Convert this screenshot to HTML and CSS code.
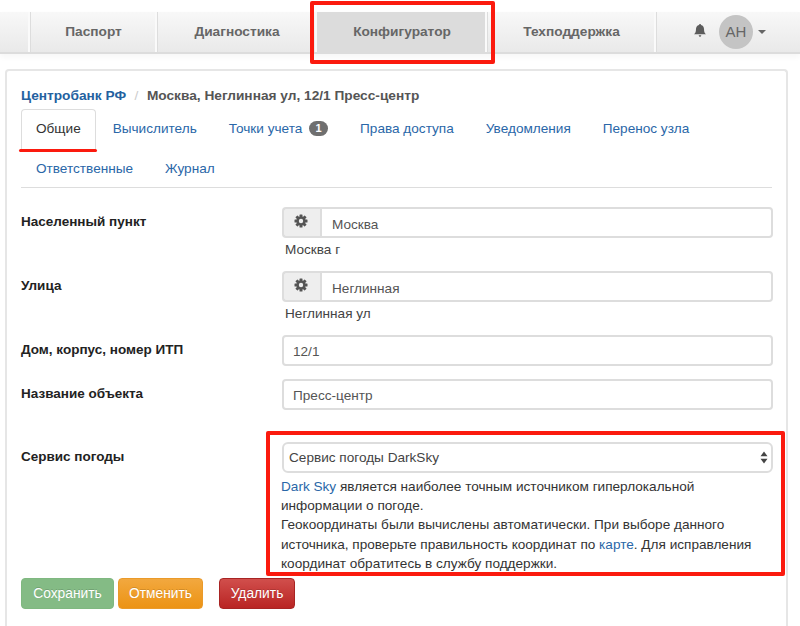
FILE: index.html
```html
<!DOCTYPE html>
<html lang="ru">
<head>
<meta charset="utf-8">
<title>Конфигуратор</title>
<link rel="stylesheet" href="styles.css">
</head>
<body>
<nav class="navbar">
  <span class="nav-item nav-blank"></span>
  <a class="nav-item nav-passport">Паспорт</a>
  <a class="nav-item nav-diag">Диагностика</a>
  <a class="nav-item nav-config active">Конфигуратор</a>
  <a class="nav-item nav-support">Техподдержка</a>
  <div class="nav-user">
    <svg class="bell" width="14" height="15" viewBox="0 0 14 15"><path d="M7 1c.6 0 1 .4 1 .9 2 .4 3 2 3 4.100 0 3 .8 4.400 2 5.300H1C2.200 10.400 3 9 3 6c0-2.100 1-3.700 3-4.100C6 1.400 6.400 1 7 1z"/><path d="M5.700 12.300h2.600C8.200 13.200 7.700 13.800 7 13.800s-1.200-.6-1.300-1.500z"/></svg>
    <span class="avatar">АН</span>
    <span class="caret"></span>
  </div>
</nav>

<main class="panel">
  <div class="crumbs"><a class="crumb-link">Центробанк РФ</a><span class="crumb-sep">/</span><span class="crumb-cur">Москва, Неглинная ул, 12/1 Пресс-центр</span></div>
  <ul class="tabs">
    <li class="tab active"><a>Общие</a></li>
    <li class="tab"><a>Вычислитель</a></li>
    <li class="tab"><a>Точки учета <span class="badge">1</span></a></li>
    <li class="tab"><a>Права доступа</a></li>
    <li class="tab"><a>Уведомления</a></li>
    <li class="tab"><a>Перенос узла</a></li>
    <li class="tab"><a>Ответственные</a></li>
    <li class="tab"><a>Журнал</a></li>
  </ul>

  <form class="form">
    <div class="row row-help">
      <label class="label">Населенный пункт</label>
      <div class="field">
        <div class="group">
          <span class="addon"><svg width="14" height="14" viewBox="0 0 14 14"><g fill="#555"><rect x="5.500" y="0.500" width="3" height="13" rx=".5"/><rect x="5.500" y="0.500" width="3" height="13" rx=".5" transform="rotate(45 7 7)"/><rect x="5.500" y="0.500" width="3" height="13" rx=".5" transform="rotate(90 7 7)"/><rect x="5.500" y="0.500" width="3" height="13" rx=".5" transform="rotate(135 7 7)"/></g><circle cx="7" cy="7" r="3.500" fill="none" stroke="#555" stroke-width="2.200"/><circle cx="7" cy="7" r="2.200" fill="#eee"/></svg></span>
          <input class="input input-joined" value="Москва">
        </div>
        <div class="help">Москва г</div>
      </div>
    </div>
    <div class="row row-help">
      <label class="label">Улица</label>
      <div class="field">
        <div class="group">
          <span class="addon"><svg width="14" height="14" viewBox="0 0 14 14"><g fill="#555"><rect x="5.500" y="0.500" width="3" height="13" rx=".5"/><rect x="5.500" y="0.500" width="3" height="13" rx=".5" transform="rotate(45 7 7)"/><rect x="5.500" y="0.500" width="3" height="13" rx=".5" transform="rotate(90 7 7)"/><rect x="5.500" y="0.500" width="3" height="13" rx=".5" transform="rotate(135 7 7)"/></g><circle cx="7" cy="7" r="3.500" fill="none" stroke="#555" stroke-width="2.200"/><circle cx="7" cy="7" r="2.200" fill="#eee"/></svg></span>
          <input class="input input-joined" value="Неглинная">
        </div>
        <div class="help">Неглинная ул</div>
      </div>
    </div>
    <div class="row row-plain">
      <label class="label">Дом, корпус, номер ИТП</label>
      <div class="field"><input class="input" value="12/1"></div>
    </div>
    <div class="row row-plain">
      <label class="label">Название объекта</label>
      <div class="field"><input class="input" value="Пресс-центр"></div>
    </div>
    <div class="row row-weather">
      <label class="label">Сервис погоды</label>
      <div class="field">
        <div class="select-wrap">
          <select class="select"><option>Сервис погоды DarkSky</option></select>
          <svg class="select-arrows" width="8" height="13" viewBox="0 0 8 13"><path d="M4 .5 7.500 5.300H.5zM4 12.500.5 7.700h7z"/></svg>
        </div>
        <p class="note"><a>Dark Sky</a> является наиболее точным источником гиперлокальной информации о погоде.<br>Геокоординаты были вычислены автоматически. При выборе данного источника, проверьте правильность координат по <a>карте</a>. Для исправления координат обратитесь в службу поддержки.</p>
      </div>
    </div>
    <div class="actions">
      <button type="button" class="btn btn-save">Сохранить</button>
      <button type="button" class="btn btn-cancel">Отменить</button>
      <button type="button" class="btn btn-delete">Удалить</button>
    </div>
  </form>
</main>

<div class="mark mark-nav"></div>
<div class="mark mark-weather"></div>
<div class="mark-line"></div>
</body>
</html>
```

FILE: styles.css
```css
* { box-sizing: border-box; }
html, body { margin: 0; height: 100%; overflow: hidden; }
body {
  background: #fff;
  color: #333;
  font-family: "Liberation Sans", Arial, sans-serif;
  font-size: 13.6px;
  line-height: 20px;
  padding-top: 12px;
  position: relative;
}
a { color: #2a67a8; text-decoration: none; }

.navbar {
  display: flex;
  height: 42px;
  background: linear-gradient(#f8f8f8, #e9e9e9);
  border-bottom: 2px solid #dcdcdc;
  box-shadow: 0 3px 6px rgba(0,0,0,.04);
}
.nav-item {
  display: flex;
  align-items: center;
  justify-content: center;
  padding-left: 2px;
  border-right: 2px solid #fafafa;
  box-shadow: 1px 0 0 #ddd;
  color: #666;
  font-weight: 700;
  font-size: 13.7px;
}
.nav-blank { width: 30px; }
.nav-passport { width: 127px; }
.nav-diag { width: 160px; }
.nav-config { width: 170px; }
.nav-support { width: 169px; }
.nav-item.active { background: #dcdcdc; }
.nav-user {
  display: flex;
  align-items: center;
  padding-left: 37px;
}
.bell { fill: #5c5c5c; margin-top: -4px; }
.avatar {
  width: 34px;
  height: 34px;
  margin-left: 12px;
  border-radius: 50%;
  background: #c4c4c4;
  color: #666;
  font-size: 15px;
  display: flex;
  align-items: center;
  justify-content: center;
}
.caret {
  margin-left: 5px;
  border-top: 4px solid #666;
  border-left: 4px solid transparent;
  border-right: 4px solid transparent;
}

.panel {
  margin: 15px 12px 0 5px;
  height: 557px;
  padding: 15px 14px 0 14px;
  border: 2px solid #e6e6e6;
  border-bottom: 0;
  border-radius: 4px 4px 0 0;
}
.crumbs { font-weight: 700; font-size: 13.7px; color: #555; height: 23px; }
.crumb-link { color: #24619f; }
.crumb-sep { color: #ccc; font-weight: 400; padding: 0 8.500px; }

.tabs {
  list-style: none;
  margin: 0;
  padding: 0;
  display: flex;
  flex-wrap: wrap;
  align-content: flex-start;
  height: 79px;
  font-size: 13.6px;
  border-bottom: 1px solid #ddd;
}
.tab { margin-right: 2px; height: 40px; }
.tab a {
  display: block;
  padding: 9px 14px 10px;
  border: 1px solid transparent;
  border-bottom: 0;
  border-radius: 4px 4px 0 0;
}
.tab.active a { color: #333; border-color: #ddd; }
.badge {
  display: inline-block;
  min-width: 19px;
  height: 15px;
  border-radius: 8px;
  background: #6f6f6f;
  color: #fff;
  font-size: 11px;
  font-weight: 700;
  line-height: 15px;
  text-align: center;
  vertical-align: 1px;
  margin-left: 3px;
}

.form { padding-top: 19px; }
.row {
  display: grid;
  grid-template-columns: 261px 491px;
  align-items: start;
}
.row-help { height: 64px; }
.row-plain { height: 44px; }
.row-weather { padding-top: 19px; }
.label { font-weight: 700; color: #222; font-size: 13.5px; line-height: 20px; padding-top: 5px; }
.group { display: flex; height: 31px; }
.addon {
  width: 38px;
  flex: none;
  display: flex;
  align-items: center;
  justify-content: center;
  padding: 0 3px 3px 0;
  background: #eee;
  border: 2px solid #ddd;
  border-right: 0;
  border-radius: 4px 0 0 4px;
}
.input {
  display: block;
  width: 100%;
  height: 31px;
  padding: 1px 9px 0;
  border: 2px solid #ddd;
  border-radius: 4px;
  color: #555;
  font: 13.6px "Liberation Sans", Arial, sans-serif;
  background: #fff;
}
.input-joined { border-radius: 0 4px 4px 0; padding: 3px 10px 0; }
.help { padding-left: 3px; height: 20px; margin-top: 2px; color: #444; line-height: 20px; }

.select-wrap { position: relative; height: 31px; }
.select {
  appearance: none;
  width: 100%;
  height: 31px;
  padding: 0 20px 0 5px;
  border: 2px solid #ddd;
  border-radius: 6px;
  background: #fff;
  color: #444;
  font: 13.6px "Liberation Sans", Arial, sans-serif;
}
.select-arrows { position: absolute; right: 5px; top: 9px; fill: #444; }
.note { margin: 4px 0 0 -1px; line-height: 19.2px; width: 480px; color: #333; }

.actions { display: flex; margin-top: 5px; }
.btn {
  height: 31px;
  padding: 0 8px;
  border-radius: 4px;
  color: #fff;
  font: 13.8px "Liberation Sans", Arial, sans-serif;
  text-shadow: 0 -1px 0 rgba(0,0,0,.15);
}
.btn-save { width: 93px; background: #84bb85; border: 1px solid #7fb880; }
.btn-cancel { width: 85px; margin-left: 4px; background: linear-gradient(#f2a83f, #ec9314); border: 1px solid #ea9a2a; }
.btn-delete { width: 76px; margin-left: 16px; background: linear-gradient(#d14f4c, #b92423); border: 1px solid #a82423; }

.mark { position: absolute; border: 4px solid #fb1a0e; border-radius: 2px; pointer-events: none; }
.mark-nav { left: 310px; top: 1px; width: 185px; height: 63px; }
.mark-weather { left: 266px; top: 431px; width: 519px; height: 145px; }
.mark-line { position: absolute; left: 19px; top: 149px; width: 78px; height: 3px; border-radius: 2px; background: #fb1a0e; }
```
